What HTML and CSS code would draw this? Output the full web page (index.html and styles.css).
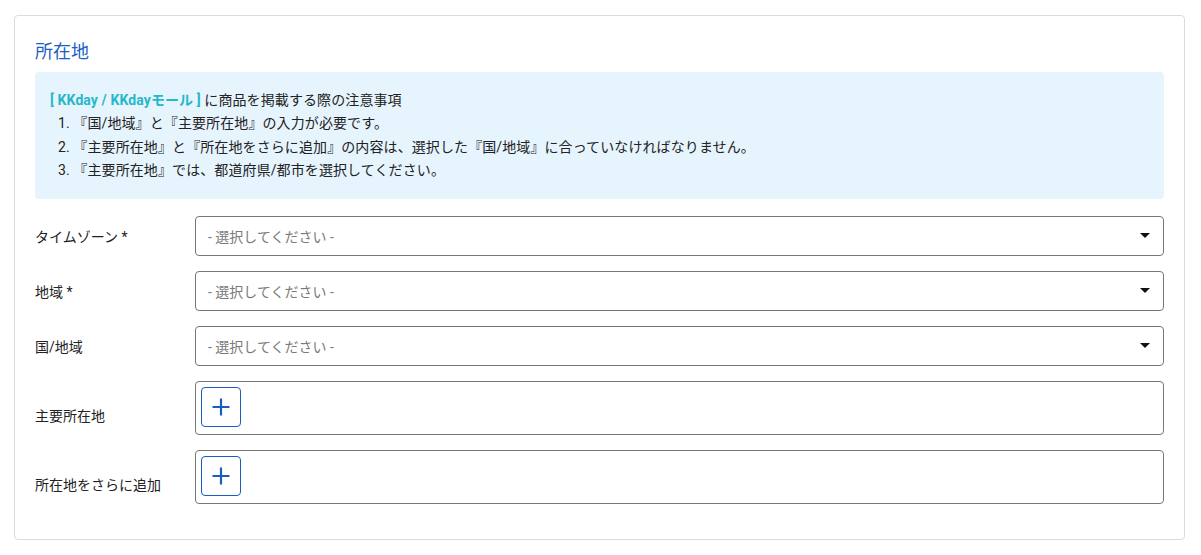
FILE: index.html
```html
<!DOCTYPE html>
<html lang="ja">
<head>
<meta charset="utf-8">
<link rel="stylesheet" href="styles.css">
</head>
<body>
<div class="card">
  <h2 class="title">所在地</h2>
  <div class="notice">
    <p class="notice-head"><span class="brand">[ KKday / KKdayモール ]</span> に商品を掲載する際の注意事項</p>
    <ol class="notice-list">
      <li>『国/地域』と『主要所在地』の入力が必要です。</li>
      <li>『主要所在地』と『所在地をさらに追加』の内容は、選択した『国/地域』に合っていなければなりません。</li>
      <li>『主要所在地』では、都道府県/都市を選択してください。</li>
    </ol>
  </div>
  <div class="form">
    <div class="row">
      <div class="label">タイムゾーン *</div>
      <div class="select"><span class="placeholder">- 選択してください -</span><span class="caret"></span></div>
    </div>
    <div class="row">
      <div class="label">地域 *</div>
      <div class="select"><span class="placeholder">- 選択してください -</span><span class="caret"></span></div>
    </div>
    <div class="row">
      <div class="label">国/地域</div>
      <div class="select"><span class="placeholder">- 選択してください -</span><span class="caret"></span></div>
    </div>
    <div class="row">
      <div class="label">主要所在地</div>
      <div class="box">
        <button class="add" type="button" aria-label="追加">
          <svg width="20" height="20" viewBox="0 0 20 20"><path d="M10 1.5v17M1.5 10h17" stroke="#1a5cbf" stroke-width="2.2" fill="none"/></svg>
        </button>
      </div>
    </div>
    <div class="row">
      <div class="label">所在地をさらに追加</div>
      <div class="box">
        <button class="add" type="button" aria-label="追加">
          <svg width="20" height="20" viewBox="0 0 20 20"><path d="M10 1.5v17M1.5 10h17" stroke="#1a5cbf" stroke-width="2.2" fill="none"/></svg>
        </button>
      </div>
    </div>
  </div>
</div>
</body>
</html>
```
FILE: styles.css
```css
* { box-sizing: border-box; }
html, body { margin: 0; padding: 0; background: #fff; }
body {
  font-family: Roboto, "Noto Sans CJK JP", sans-serif;
  font-size: 14px;
  color: #222;
  padding: 15px 16px 15px 14px;
}
.card {
  border: 1px solid #dcdcdc;
  border-radius: 4px;
  padding: 23px 20px 35px 20px;
  height: 525px;
}
.title {
  margin: 0 0 7px 0;
  font-size: 18px;
  font-weight: 400;
  line-height: 26px;
  color: #1a5fc0;
}
.notice {
  background: #e6f4fd;
  border-radius: 4px;
  padding: 17px 15px 16px 15px;
  line-height: 23.4px;
  letter-spacing: 0.1px;
  color: #222;
  margin-bottom: 17px;
}
.notice-head { margin: 0; }
.brand { color: #26b7c9; font-weight: 700; }
.notice-list {
  margin: 0;
  padding: 0 0 0 8px;
  list-style-position: inside;
}
.form { display: flex; flex-direction: column; gap: 15px; }
.row { display: flex; align-items: flex-end; }
.label {
  width: 160px;
  flex: none;
  line-height: 20px;
  padding-bottom: 9px;
  color: #222;
}
.select {
  flex: 1;
  height: 40px;
  border: 1px solid #777;
  border-radius: 4px;
  display: flex;
  align-items: center;
  justify-content: space-between;
  padding: 0 13px 0 12px;
}
.placeholder { color: #7a7a7a; }
.caret {
  width: 0; height: 0;
  border-left: 5px solid transparent;
  border-right: 5px solid transparent;
  border-top: 5px solid #111;
}
.box {
  flex: 1;
  height: 54px;
  border: 1px solid #777;
  border-radius: 4px;
  padding: 5px;
  display: flex;
  align-items: flex-start;
}
.add {
  width: 40px;
  height: 40px;
  border: 1px solid #1a5cbf;
  border-radius: 4px;
  background: #fff;
  padding: 0;
  display: flex;
  align-items: center;
  justify-content: center;
  cursor: pointer;
}
```
